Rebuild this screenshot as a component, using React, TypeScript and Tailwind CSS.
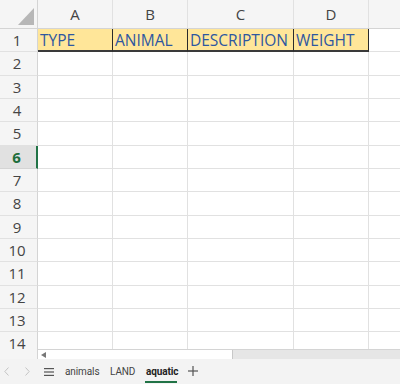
import React from "react";

const cols = [
  { l: "A", w: 75 },
  { l: "B", w: 75 },
  { l: "C", w: 106 },
  { l: "D", w: 75 },
  { l: "E", w: 75 },
];
const header = ["TYPE", "ANIMAL", "DESCRIPTION", "WEIGHT"];

export default function App() {
  const rows = Array.from({ length: 14 }, (_, i) => i + 1);
  return (
    <div
      className="w-[400px] h-[384px] overflow-hidden bg-white flex flex-col"
      style={{ fontFamily: '"Open Sans", "Noto Sans", sans-serif' }}
    >
      {/* column header */}
      <div className="flex h-[29px] shrink-0 bg-[#f5f5f5] border-b border-[#d4d4d4]">
        <div className="w-[38px] shrink-0 relative border-r border-[#d4d4d4]">
          <svg className="absolute left-[18px] top-[8px]" width="16" height="17" viewBox="0 0 16 17">
            <polygon points="16,0 16,17 0,17" fill="#b7b7b7" />
          </svg>
        </div>
        {cols.map((c) => (
          <div
            key={c.l}
            style={{ width: c.w }}
            className="shrink-0 border-r border-[#e1e1e1] flex items-center justify-center text-[15px] text-[#444] pt-[1px]"
          >
            {c.l}
          </div>
        ))}
      </div>
      {/* rows */}
      <div className="flex-1 overflow-hidden flex flex-col">
        {rows.map((r) => (
          <div key={r} className="flex h-[23.33px] shrink-0">
            <div
              className={
                "w-[38px] shrink-0 flex items-center justify-center pr-[3px] text-[15px] border-b " +
                (r === 6
                  ? "bg-[#e1e1e1] text-[#1e6e3c] font-bold border-r-[2px] border-r-[#217346] border-b-[#d4d4d4]"
                  : "bg-[#f5f5f5] text-[#444] border-r border-r-[#d4d4d4] border-b-[#e1e1e1]")
              }
            >
              {r}
            </div>
            {cols.map((c, ci) => {
              const filled = r === 1 && ci < 4;
              return (
                <div
                  key={c.l}
                  style={{ width: c.w }}
                  className={
                    "shrink-0 flex items-center overflow-hidden whitespace-nowrap " +
                    (filled
                      ? "bg-[#ffe699] border-r border-r-[#2b2b2b] border-b-[2px] border-b-[#3a3a3a] pl-[2px] text-[15.5px] text-[#2e57a0] pt-[1px]"
                      : "border-r border-r-[#e1e1e1] border-b border-b-[#e1e1e1]")
                  }
                >
                  {filled ? header[ci] : null}
                </div>
              );
            })}
          </div>
        ))}
      </div>
      {/* scrollbar */}
      <div className="flex h-[10px] shrink-0">
        <div className="w-[38px] shrink-0 bg-[#f5f5f5] border-r border-[#d4d4d4]" />
        <div className="flex-1 flex bg-[#e6e6e6] border-t border-[#d4d4d4]">
          <div className="w-[195px] bg-white border-r border-[#c8c8c8] flex items-center pl-[3px]">
            <svg width="5" height="6" viewBox="0 0 5 6">
              <polygon points="5,0 5,6 0,3" fill="#777" />
            </svg>
          </div>
        </div>
      </div>
      {/* tab bar */}
      <div
        className="h-[25px] shrink-0 bg-[#f3f3f3] relative text-[10px] tracking-[-0.1px] text-[#444]"
        style={{ fontFamily: 'Roboto, "Noto Sans", sans-serif' }}
      >
        <svg className="absolute left-[4px] top-[8px]" width="5" height="9" viewBox="0 0 5 9">
          <polyline points="4.5,0.5 0.8,4.5 4.5,8.5" fill="none" stroke="#c4c4c4" strokeWidth="1" />
        </svg>
        <svg className="absolute left-[25px] top-[8px]" width="5" height="9" viewBox="0 0 5 9">
          <polyline points="0.5,0.5 4.2,4.5 0.5,8.5" fill="none" stroke="#c4c4c4" strokeWidth="1" />
        </svg>
        <svg className="absolute left-[44px] top-[9px]" width="10" height="8" viewBox="0 0 10 8">
          <rect x="0" y="0" width="10" height="1.2" fill="#555" />
          <rect x="0" y="3.4" width="10" height="1.2" fill="#555" />
          <rect x="0" y="6.8" width="10" height="1.2" fill="#555" />
        </svg>
        <span className="absolute left-[65px] top-[6px] leading-[13px]">animals</span>
        <span className="absolute left-[110px] top-[6px] leading-[13px]">LAND</span>
        <span className="absolute left-[146px] top-[6px] leading-[13px] font-bold text-[#222]">aquatic</span>
        <div className="absolute left-[145px] top-[22px] w-[32px] h-[2px] bg-[#217346]" />
        <svg className="absolute left-[188px] top-[7px]" width="10" height="10" viewBox="0 0 10 10">
          <rect x="4.4" y="0" width="1.2" height="10" fill="#555" />
          <rect x="0" y="4.4" width="10" height="1.2" fill="#555" />
        </svg>
      </div>
    </div>
  );
}
